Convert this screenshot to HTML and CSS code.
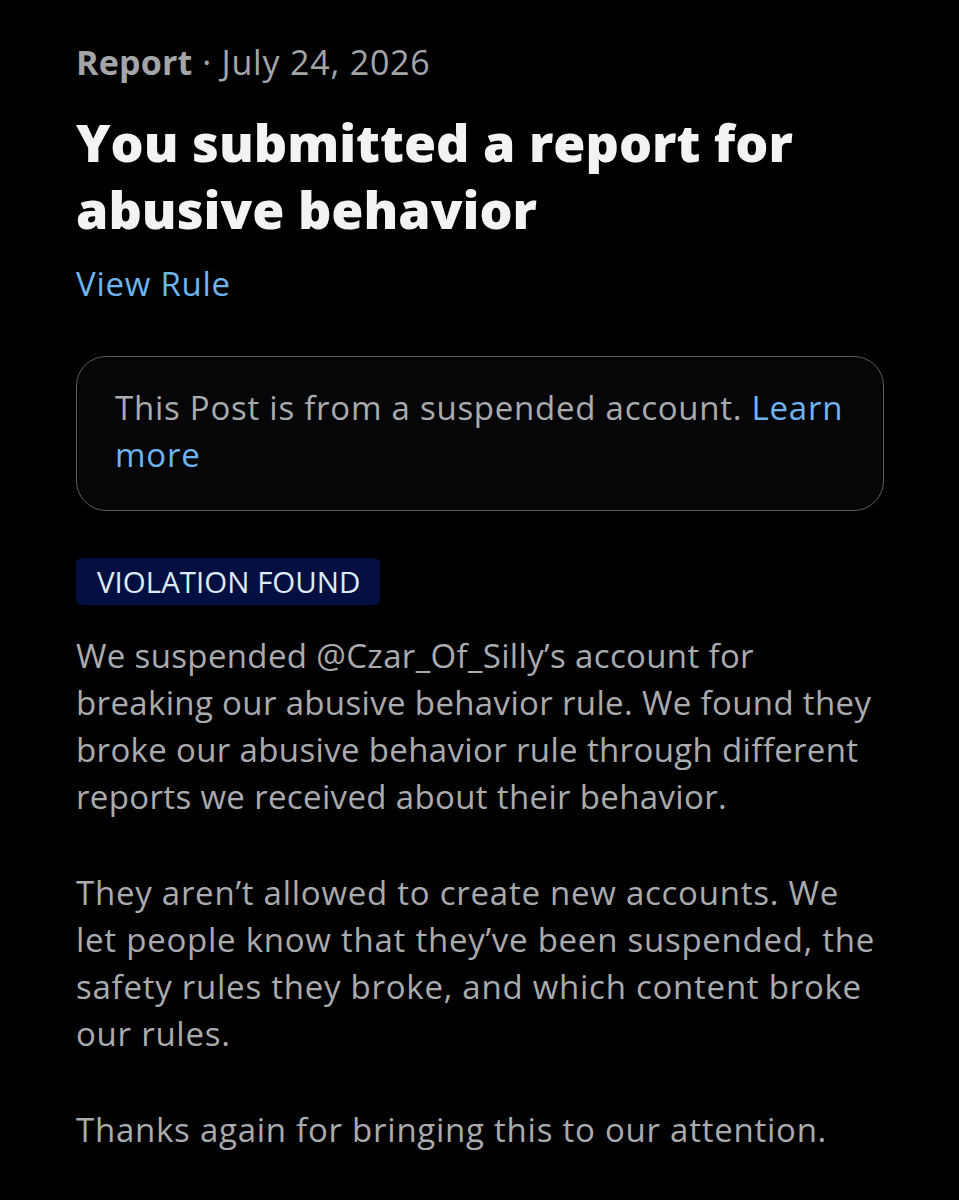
FILE: index.html
```html
<!DOCTYPE html>
<html lang="en">
<head>
<meta charset="utf-8">
<title>Report</title>
<link rel="stylesheet" href="styles.css">
</head>
<body>
<main class="page">
  <p class="meta"><span class="meta-type">Report</span> · July 24, 2026</p>
  <h1 class="title">You submitted a report for abusive behavior</h1>
  <a class="link rule-link" href="#">View Rule</a>
  <div class="notice">
    <p>This Post is from a suspended account. <a class="link" href="#">Learn more</a></p>
  </div>
  <span class="badge">VIOLATION FOUND</span>
  <div class="body">
    <p class="tight">We suspended @Czar_Of_Silly’s account for breaking our abusive behavior rule. We found they broke our abusive behavior rule through different reports we received about their behavior.</p>
    <p>They aren’t allowed to create new accounts. We let people know that they’ve been suspended, the safety rules they broke, and which content broke our rules.</p>
    <p>Thanks again for bringing this to our attention.</p>
  </div>
</main>
</body>
</html>
```

FILE: styles.css
```css
html, body {
  margin: 0;
  padding: 0;
  background: #000;
}
body {
  font-family: "Open Sans", "Noto Sans", sans-serif;
  color: #a9abae;
}
.page {
  padding: 38px 76px 0 76px;
  display: flex;
  flex-direction: column;
  align-items: flex-start;
}
.meta {
  margin: 0;
  font-size: 34px;
  letter-spacing: 0.8px;
  line-height: 48px;
  color: #a3a5a8;
}
.meta-type {
  font-weight: 700;
  letter-spacing: 0.2px;
}
.title {
  margin: 22px 0 0 0;
  font-size: 52px;
  line-height: 67px;
  font-weight: 800;
  color: #f2f3f4;
  width: 780px;
}
.link {
  color: #6db5ee;
  text-decoration: none;
}
.rule-link {
  margin-top: 22px;
  font-size: 33px;
  letter-spacing: 0.75px;
  line-height: 40px;
}
.notice {
  margin-top: 52px;
  box-sizing: border-box;
  width: 808px;
  border: 1.5px solid #5a5c60;
  border-radius: 30px;
  background: #060609;
  padding: 27px 36px 32px 38px;
}
.notice p {
  margin: 0;
  font-size: 33px;
  letter-spacing: 0.75px;
  line-height: 47px;
}
.badge {
  margin-top: 47px;
  background: #030f40;
  color: #dcebf6;
  font-size: 29.5px;
  line-height: 47px;
  padding: 0 20px 0 21px;
  border-radius: 6px;
}
.body {
  margin-top: 27px;
  width: 810px;
}
.body p {
  margin: 0 0 49px 0;
  font-size: 33px;
  letter-spacing: 0.75px;
  line-height: 47px;
}
.body p.tight {
  letter-spacing: 0.35px;
}
```
